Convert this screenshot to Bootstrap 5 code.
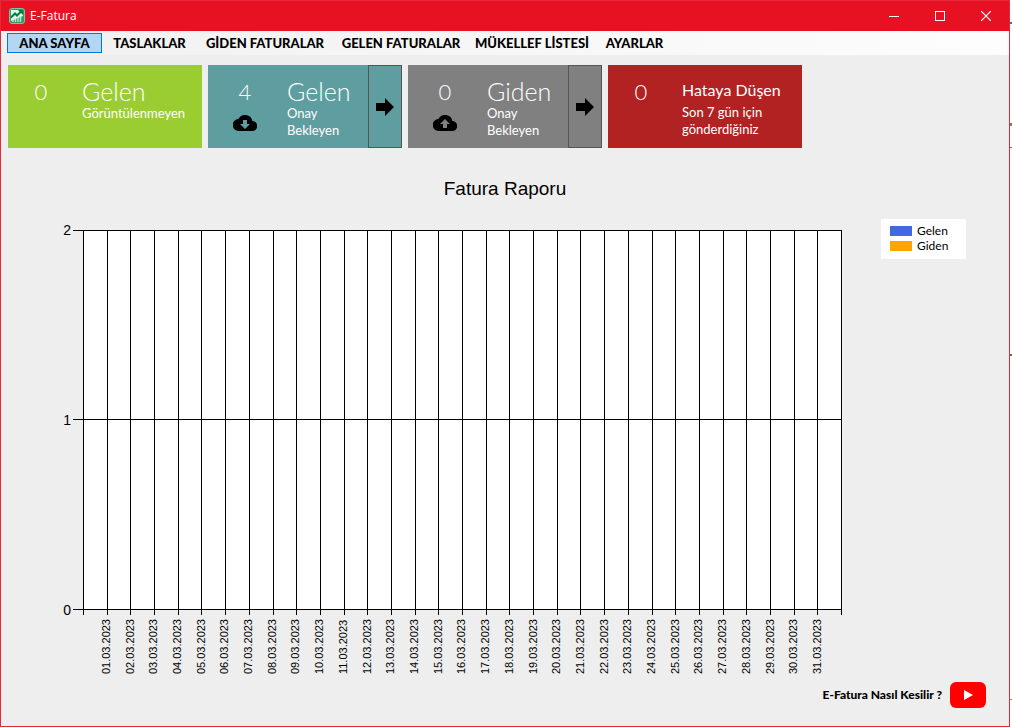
<!DOCTYPE html>
<html lang="tr">
<head>
<meta charset="utf-8">
<meta name="viewport" content="width=device-width, initial-scale=1">
<title>E-Fatura</title>
<link href="https://cdn.jsdelivr.net/npm/bootstrap@5.3.0/dist/css/bootstrap.min.css" rel="stylesheet">
<style>
  :root { --ui: Lato, "Open Sans", sans-serif; --plain: "Liberation Sans", Arial, sans-serif; --line: #000; }
  body { background: #fff; font-family: var(--ui); color: #000; padding: 0 2px 1px 0; }
  /* edge of the window behind */
  body {
    background-image: linear-gradient(#666, #666), linear-gradient(#777, #777), linear-gradient(#666, #666), linear-gradient(#666, #666), linear-gradient(#888, #888);
    background-size: 2px 2px, 2px 3px, 2px 1px, 2px 2px, 2px 1px;
    background-position: right 22px, right 123px, right 147px, right 354px, right 699px;
    background-repeat: no-repeat;
  }
  .app-window { min-height: calc(100vh - 1px); background: #eee; border: 1px solid #e5283a; }
  .title-bar { height: 30px; background: #e81123; color: #fff; font: 12px/30px "Open Sans", sans-serif; padding-left: 8px; }
  .title-text { margin-left: 5px; }
  .caption-btn { width: 46px; height: 30px; border: 0; padding: 0; background: transparent; color: #fff; line-height: 0; }
  .menu-strip { min-height: 24px; padding: 2px 6px; background: linear-gradient(90deg, #f0f0f0, #fdfdfd); }
  .menu-strip .nav-link { font-size: 13px; font-weight: 900; line-height: 18px; color: #000; padding: 0; border: 1px solid transparent; border-radius: 0; text-align: center; white-space: nowrap; }
  .menu-strip .short { width: 95px; }
  .menu-strip .medium { width: 126px; }
  .menu-strip .long { width: 136px; }
  .menu-strip .last { width: 79px; }
  .menu-strip .nav-link.active { background: #b3d7f3; border-color: #0078d7; }
  .tiles { gap: 6px; padding: 10px 7px 0; }
  .tile { width: 194px; min-height: 83px; color: #fff; font-weight: 300; }
  .tile-count { width: 74px; padding: 16px 8px 0 0; font-size: 22px; line-height: 22px; text-align: center; }
  .tile-count.wide { width: 79px; padding-right: 5px; }
  .tile-count svg { display: block; margin: 12px auto 0; }
  .tile-text { padding-top: 13px; font-size: 13px; line-height: 17px; font-weight: 400; }
  .tile-name { font-size: 25px; line-height: 27px; font-weight: 300; }
  .tile-name.compact { font-size: 16px; line-height: 23px; font-weight: 400; margin-bottom: 3px; }
  .tile-go { width: 34px; border: 1px solid #555; background: transparent; padding: 0 0 2px; }
  .lime { background: #9acd32; } .teal { background: #5f9ea0; } .grey { background: #808080; } .brick { background: #b22222; }
  .chart-title { font: 19px/24px var(--plain); margin: 29px 0 29px; }
  .chart-grid { display: grid; grid-template-columns: 82px minmax(0, 1fr) 39px 85px 43px; grid-template-rows: minmax(200px, 1fr) auto; }
  .y-axis { font: 14px/20px var(--plain); margin: -10px 0; }
  .y-axis span::after { content: ""; width: 10px; height: 1px; margin-left: 2px; background: var(--line); }
  .plot { background: #fff; border-top: 1px solid var(--line); border-bottom: 1px solid var(--line); display: grid; }
  .plot > div { grid-area: 1 / 1; }
  .mid-line { align-self: center; height: 1px; background: var(--line); }
  .cells i { flex: 1 1 0; border-left: 1px solid var(--line); }
  .cells i:last-child { border-right: 1px solid var(--line); }
  .ticks { height: 5px; }
  .dates { font: 11px/12px var(--plain); padding: 4px 13px 0 11px; margin-bottom: 7px; }
  .dates span { flex: 1 1 0; display: flex; justify-content: center; }
  .dates time { writing-mode: vertical-rl; transform: rotate(180deg); }
  .legend-box { align-self: start; background: #fff; padding: 4px 9px 6px; margin-top: -11px; font-size: 12px; line-height: 15px; }
  .legend-box li { gap: 5px; }
  .swatch { width: 22px; height: 10px; }
  .help-link { color: #000; text-decoration: none; font-size: 12px; font-weight: 900; gap: 7px; padding: 0 22px 17px 0; }
</style>
</head>
<body>
<div class="app-window d-flex flex-column">
  <header class="title-bar d-flex align-items-center">
    <svg width="16" height="16" viewBox="0 0 16 16" aria-hidden="true"><rect x=".5" y=".5" width="15" height="15" rx="2.5" fill="#2a9d63" stroke="#7cc59f"/><path d="M2 2h12v6L2 13z" fill="#e6f4ec"/><path d="M2 9.500 6 5.500 8 7.500 12 3.500" fill="none" stroke="#087b42" stroke-width="2"/><path d="M9 2H14v5z" fill="#087b42"/><path d="M4 14v-2M6.500 14v-3M9 14v-4M11.500 14V8" stroke="#bfe3cf" stroke-width="1.500"/></svg>
    <span class="title-text">E-Fatura</span>
    <div class="ms-auto d-flex">
      <button class="caption-btn" type="button" aria-label="Simge durumuna küçült"><svg width="10" height="10"><path d="M0 5.500h10" stroke="#fff"/></svg></button>
      <button class="caption-btn" type="button" aria-label="Ekranı kapla"><svg width="10" height="10"><rect x=".5" y=".5" width="9" height="9" fill="none" stroke="#fff"/></svg></button>
      <button class="caption-btn" type="button" aria-label="Kapat"><svg width="10" height="10"><path d="M0 0 10 10M10 0 0 10" stroke="#fff" stroke-width="1.200"/></svg></button>
    </div>
  </header>

  <nav class="menu-strip nav">
    <a class="nav-link short active" href="#" aria-current="page">ANA SAYFA</a>
    <a class="nav-link short" href="#">TASLAKLAR</a>
    <a class="nav-link long" href="#">GİDEN FATURALAR</a>
    <a class="nav-link long" href="#">GELEN FATURALAR</a>
    <a class="nav-link medium" href="#">MÜKELLEF LİSTESİ</a>
    <a class="nav-link last" href="#">AYARLAR</a>
  </nav>

  <section class="tiles d-flex flex-wrap">
    <div class="tile lime d-flex">
      <div class="tile-count">0</div>
      <div class="tile-text"><div class="tile-name">Gelen</div>Görüntülenmeyen</div>
    </div>
    <div class="tile teal d-flex">
      <div class="tile-count wide">4
        <svg width="24" height="16" viewBox="0 0 24 16" aria-hidden="true"><path d="M19.400 6A7.500 7.500 0 0 0 5.400 4 6 6 0 0 0 6 16h13a5 5 0 0 0 .4-10z"/><path d="M10 5h4v4h3l-5 5-5-5h3z" fill="#5f9ea0"/></svg>
      </div>
      <div class="tile-text"><div class="tile-name">Gelen</div>Onay<br>Bekleyen</div>
      <button class="tile-go ms-auto" type="button" aria-label="Gelen faturaları aç"><svg width="18" height="18" viewBox="0 0 18 18"><path d="M0 5h9V0l9 9-9 9v-5H0z"/></svg></button>
    </div>
    <div class="tile grey d-flex">
      <div class="tile-count wide">0
        <svg width="24" height="16" viewBox="0 0 24 16" aria-hidden="true"><path d="M19.400 6A7.500 7.500 0 0 0 5.400 4 6 6 0 0 0 6 16h13a5 5 0 0 0 .4-10z"/><path d="M10 13h4V9h3l-5-5-5 5h3z" fill="#808080"/></svg>
      </div>
      <div class="tile-text"><div class="tile-name">Giden</div>Onay<br>Bekleyen</div>
      <button class="tile-go ms-auto" type="button" aria-label="Giden faturaları aç"><svg width="18" height="18" viewBox="0 0 18 18"><path d="M0 5h9V0l9 9-9 9v-5H0z"/></svg></button>
    </div>
    <div class="tile brick d-flex">
      <div class="tile-count">0</div>
      <div class="tile-text"><div class="tile-name compact">Hataya Düşen</div>Son 7 gün için<br>gönderdiğiniz</div>
    </div>
  </section>

  <main class="flex-grow-1 d-flex flex-column">
    <h1 class="chart-title text-center">Fatura Raporu</h1>
    <div class="chart-grid flex-grow-1">
      <div class="y-axis d-flex flex-column justify-content-between">
        <span class="d-flex align-items-center justify-content-end">2</span>
        <span class="d-flex align-items-center justify-content-end">1</span>
        <span class="d-flex align-items-center justify-content-end">0</span>
      </div>
      <div class="plot">
        <div class="cells d-flex"></div>
        <div class="mid-line"></div>
      </div>
      <div></div>
      <ul class="legend-box list-unstyled mb-0">
        <li class="d-flex align-items-center"><span class="swatch" style="background:#4169e1"></span>Gelen</li>
        <li class="d-flex align-items-center"><span class="swatch" style="background:#ffa500"></span>Giden</li>
      </ul>
      <div></div>
      <div></div>
      <div>
        <div class="cells ticks d-flex"></div>
        <div class="dates d-flex"></div>
      </div>
    </div>
    <a class="help-link d-flex align-items-center align-self-end" href="#">E-Fatura Nasıl Kesilir ?
      <svg width="38" height="28" viewBox="0 0 38 28" aria-hidden="true"><rect x="1" y="1" width="36" height="26" rx="6" fill="#f00"/><path d="M15 9v10l9-5z" fill="#fff"/></svg>
    </a>
  </main>
</div>
<script src="https://cdn.jsdelivr.net/npm/bootstrap@5.3.0/dist/js/bootstrap.bundle.min.js"></script>
<script>
  const days = 31;
  document.querySelectorAll('.cells').forEach(row => { row.innerHTML = '<i></i>'.repeat(days + 1); });
  document.querySelector('.dates').innerHTML = Array.from({ length: days }, (_, i) =>
    `<span><time>${String(i + 1).padStart(2, '0')}.03.2023</time></span>`).join('');
</script>
</body>
</html>
